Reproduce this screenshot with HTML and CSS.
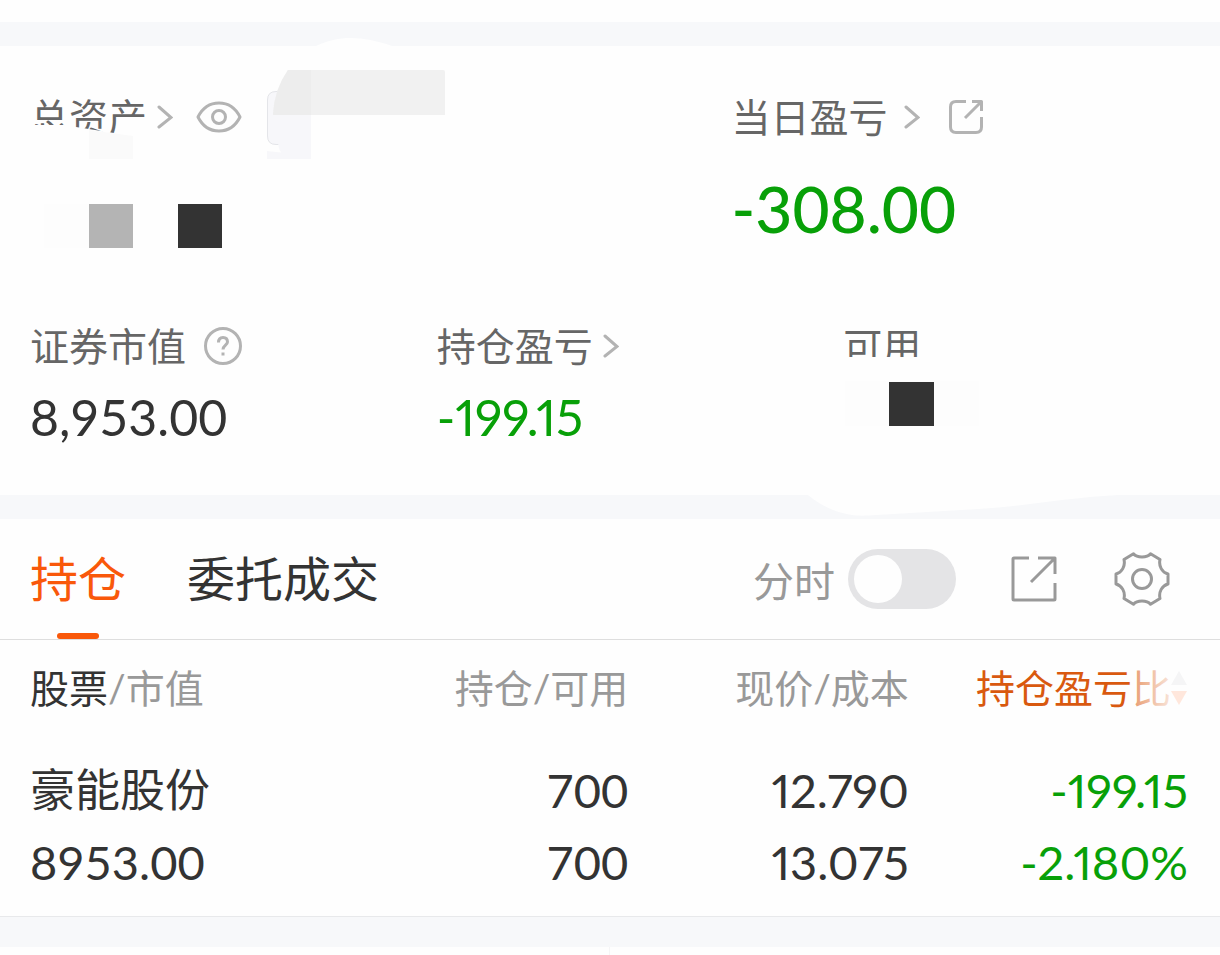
FILE: index.html
```html
<!DOCTYPE html>
<html lang="zh-CN">

<head>
    <meta charset="UTF-8">
    <meta name="viewport" content="width=device-width, initial-scale=1.0">
    <title>持仓</title>
    <link rel="stylesheet" href="styles.css">
</head>

<body>
    <div class="band band-top">
        <svg class="bulge" width="76" height="8" viewBox="0 0 76 8"><path d="M0 8C24 -3 46 -2 76 8Z" fill="#fefefe"/></svg>
    </div>

    <section class="summary">
        <div class="row row-main">
            <div class="cell">
                <div class="label">
                    <a href="#">总资产<svg class="chevron" width="16" height="24" viewBox="0 0 16 24"><path d="M2 2l12 10.500L2 22"/></svg></a>
                    <button type="button" class="icon eye" aria-label="隐藏金额">
                        <svg width="46" height="32" viewBox="0 0 46 32"><path d="M2 16C7 6 14 2 23 2S39 6 44 16C39 26 32 30 23 30S7 26 2 16Z"/><circle cx="23" cy="16" r="6.500"/></svg>
                    </button>
                </div>
            </div>
            <div class="cell">
                <div class="label">
                    <a href="#">当日盈亏<svg class="chevron wide" width="16" height="24" viewBox="0 0 16 24"><path d="M2 2l12 10.500L2 22"/></svg></a>
                    <button type="button" class="icon share" aria-label="分享">
                        <svg width="36" height="36" viewBox="0 0 36 36"><path d="M18 2.500H8Q2.500 2.500 2.500 8V28Q2.500 33.500 8 33.500H28Q33.500 33.500 33.500 28V18M24 2.500H33.500V12M33 3L17 19"/></svg>
                    </button>
                </div>
                <div class="value big green">-308.00</div>
            </div>
            <!-- mosaic over the private figures -->
            <svg class="mosaic" width="460" height="220" viewBox="0 46 460 220">
                <path d="M28 125H64L76 127L95 130L133 136L150 138V165H28Z" fill="#fefefe"/>
                <path d="M89 130L133 136V159H89Z" fill="#fafafa"/>
                <rect x="44" y="204" width="45" height="44" fill="#fdfdfd"/>
                <rect x="89" y="204" width="44" height="44" fill="#b4b4b4"/>
                <rect x="178" y="204" width="44" height="44" fill="#333"/>
                <path d="M280 91.500H276Q267.500 91.500 267.500 100V136Q267.500 144.500 276 144.500H280" fill="#f7f7fa" stroke="#e4e5e9"/>
                <path d="M278 92H311V159H267V151L281 152.500Q278 148 278 140Z" fill="#f7f7fa"/>
                <path d="M288 70H443Q445 70 445 72V115H273Q274 90 288 70Z" fill="#f1f1f1"/>
                <path d="M288 70H311V115H273Q274 90 288 70Z" fill="#ededed"/>
            </svg>
        </div>
        <div class="row row-sub">
            <div class="cell">
                <div class="label">
                    <span>证券市值</span>
                    <button type="button" class="icon help" aria-label="说明">
                        <svg width="40" height="40" viewBox="0 0 40 40"><circle cx="20" cy="20" r="17.500"/><path d="M15.500 16.500Q15.500 11.500 20 11.500T24.500 16C24.500 19 20 19.500 20 23.500M20 26.500V29.500"/></svg>
                    </button>
                </div>
                <div class="value">8,953.00</div>
            </div>
            <div class="cell">
                <div class="label">
                    <a href="#">持仓盈亏<svg class="chevron" width="16" height="24" viewBox="0 0 16 24"><path d="M2 2l12 10.500L2 22"/></svg></a>
                </div>
                <div class="value green prop">-199.15</div>
            </div>
            <div class="cell">
                <div class="label"><span>可用</span></div>
                <svg class="mosaic-sub" width="140" height="74" viewBox="840 356 140 74">
                    <rect x="840" y="357" width="90" height="20" fill="#fefefe"/>
                    <rect x="845" y="381" width="134" height="45" fill="#fdfdfd"/>
                    <rect x="889" y="382" width="45" height="44" fill="#333"/>
                </svg>
            </div>
        </div>
    </section>

    <div class="band">
        <svg class="notch" width="310" height="21" viewBox="0 0 310 21"><path d="M0 0C16 13 36 22 60 20.500L170 14C220 11 255 3 310 0Z" fill="#fefefe"/></svg>
    </div>

    <nav class="tabs">
        <a href="#" class="tab active">持仓</a>
        <a href="#" class="tab">委托成交</a>
        <div class="tools">
            <label for="fenshi">分时</label>
            <input type="checkbox" id="fenshi" class="switch">
            <button type="button" class="icon tool" aria-label="导出">
                <svg width="48" height="48" viewBox="0 0 48 48"><path d="M19 3H4Q3 3 3 4V44Q3 45 4 45H44Q45 45 45 44V28M28 3H45V19M45 3L21 27"/></svg>
            </button>
            <button type="button" class="icon tool gear" aria-label="设置">
                <svg width="56" height="54" viewBox="-1 -1 56 54"><path d="M18.500 .7C22 5 32 5 35.500 .7L45 6.500C43.500 13 47 19.500 53 21V31C47 32.500 43.500 39 45 45.500L35.500 51.300C32 47 22 47 18.500 51.300L9 45.500C10.500 39 7 32.500 1 31V21C7 19.500 10.500 13 9 6.500Z"/><circle cx="27" cy="26" r="9.500"/></svg>
            </button>
        </div>
    </nav>

    <table class="stocks">
        <thead>
            <tr>
                <th><strong>股票</strong>/市值</th>
                <th>持仓/可用</th>
                <th>现价/成本</th>
                <th class="sorted"><span class="fade">持仓盈亏比</span><svg class="sort" width="16" height="34" viewBox="0 0 16 34"><path d="M8 0L16 14H0Z" fill="#f5f5f6"/><path d="M0 20H16L8 34Z" fill="#ffe7dc"/></svg></th>
            </tr>
        </thead>
        <tbody>
            <tr>
                <td><div class="name">豪能股份</div><div>8953.00</div></td>
                <td><div>700</div><div>700</div></td>
                <td class="prop"><div>12.790</div><div>13.075</div></td>
                <td class="green prop"><div>-199.15</div><div>-2.180%</div></td>
            </tr>
        </tbody>
    </table>

    <div class="band band-bottom"></div>
    <div class="footer"></div>
</body>

</html>
```
FILE: styles.css
```css
* {
    box-sizing: border-box;
}

body {
    background-color: #fefefe;
    color: #333;
    font-family: Lato, "Noto Sans CJK SC", sans-serif;
    margin: 0;
    overflow-x: hidden;
}

a {
    color: inherit;
    text-decoration: none;
}

.band {
    background-color: #f7f8fa;
    height: 24px;
    position: relative;
}

.band-top {
    margin-top: 22px;
}

.bulge {
    bottom: 0;
    left: 316px;
    position: absolute;
}

.notch {
    left: 808px;
    position: absolute;
    top: 0;
}

.green {
    color: #08a008;
}

.prop {
    font-variant-numeric: proportional-nums;
}

/* Account summary */
.summary {
    padding: 44px 0 48px;
}

.row {
    display: grid;
    position: relative;
}

.row-main {
    grid-template-columns: 57.5% 1fr;
    margin-bottom: 70px;
}

.row-sub {
    grid-template-columns: repeat(3, 1fr);
}

.cell {
    padding-left: 30px;
    position: relative;
}

.label {
    align-items: center;
    color: #666;
    display: flex;
    font-size: 39px;
    height: 54px;
    line-height: 54px;
}

.label a {
    align-items: center;
    display: flex;
}

.value {
    font-size: 50px;
    line-height: 60px;
    margin-top: 14px;
}

.value.big {
    font-size: 64px;
    font-weight: 500;
    line-height: 80px;
    margin-top: 25px;
}

svg {
    display: block;
    fill: none;
}

.chevron {
    margin-left: 10px;
    stroke: #b3b3b3;
    stroke-linecap: round;
    stroke-width: 3;
}

.chevron.wide {
    margin-left: 16px;
}

.icon {
    background: none;
    border: 0;
    padding: 0;
    stroke: #b3b3b3;
    stroke-linejoin: round;
    stroke-width: 3;
}

.eye {
    margin-left: 23px;
}

.share {
    margin-left: 28px;
}

.help {
    margin-left: 17px;
}

.mosaic {
    left: 0;
    position: absolute;
    top: -44px;
}

.mosaic-sub {
    left: 27px;
    position: absolute;
    top: 37px;
}

/* Tabs */
.tabs {
    align-items: center;
    border-bottom: 1px solid #dedede;
    display: flex;
    gap: 61px;
    height: 121px;
    padding: 0 50px 0 30px;
}

.tab {
    font-size: 48px;
    line-height: 120px;
    position: relative;
}

.tab.active {
    color: #f9580a;
}

.tab.active::after {
    background-color: #f9580a;
    border-radius: 3px;
    bottom: 0;
    content: "";
    height: 6px;
    left: 27px;
    position: absolute;
    width: 42px;
}

.tools {
    align-items: center;
    color: #999;
    display: flex;
    font-size: 41px;
    margin-left: auto;
}

.switch {
    appearance: none;
    background-color: #e4e4e6;
    border-radius: 30px;
    height: 60px;
    margin: 0 54px 0 13px;
    padding: 6px;
    width: 108px;
}

.switch::before {
    background-color: #fefefe;
    border-radius: 50%;
    content: "";
    display: block;
    height: 48px;
    width: 48px;
}

.switch:checked {
    background-color: #f9580a;
}

.switch:checked::before {
    margin-left: auto;
}

.tool {
    stroke: #999;
}

.gear {
    margin-left: 56px;
}

/* Stock list */
.stocks {
    border-bottom: 1px solid #e8e9eb;
    border-collapse: separate;
    border-spacing: 0;
    table-layout: fixed;
    width: 100%;
}

.stocks th {
    color: #999;
    font-size: 39px;
    font-weight: 400;
    height: 98px;
    line-height: 56px;
    padding: 0 0 2px;
    text-align: right;
    white-space: nowrap;
    width: 23%;
}

.stocks th:first-child {
    padding-left: 30px;
    text-align: left;
    width: 28.5%;
}

.stocks th:last-child {
    padding-right: 33px;
    width: 25.5%;
}

.stocks th strong {
    color: #333;
    font-weight: 400;
}

.stocks .sorted {
    color: #d9590f;
}

.fade {
    position: relative;
}

.fade::after {
    background: linear-gradient(to right, rgba(254, 254, 254, .4), rgba(254, 254, 254, .85));
    bottom: 0;
    content: "";
    position: absolute;
    right: 0;
    top: 0;
    width: 39px;
}

.sort {
    display: inline-block;
    vertical-align: -2px;
}

.stocks td {
    font-size: 47px;
    line-height: 72px;
    padding: 16px 0 18px;
    text-align: right;
}

.stocks td:first-child {
    padding-left: 30px;
    text-align: left;
}

.stocks td:last-child {
    padding-right: 32px;
}

.name {
    font-size: 45px;
}

.band-bottom {
    height: 30px;
}

.footer {
    border-right: 1px solid #f5f5f6;
    height: 8px;
    width: 50%;
}
```
